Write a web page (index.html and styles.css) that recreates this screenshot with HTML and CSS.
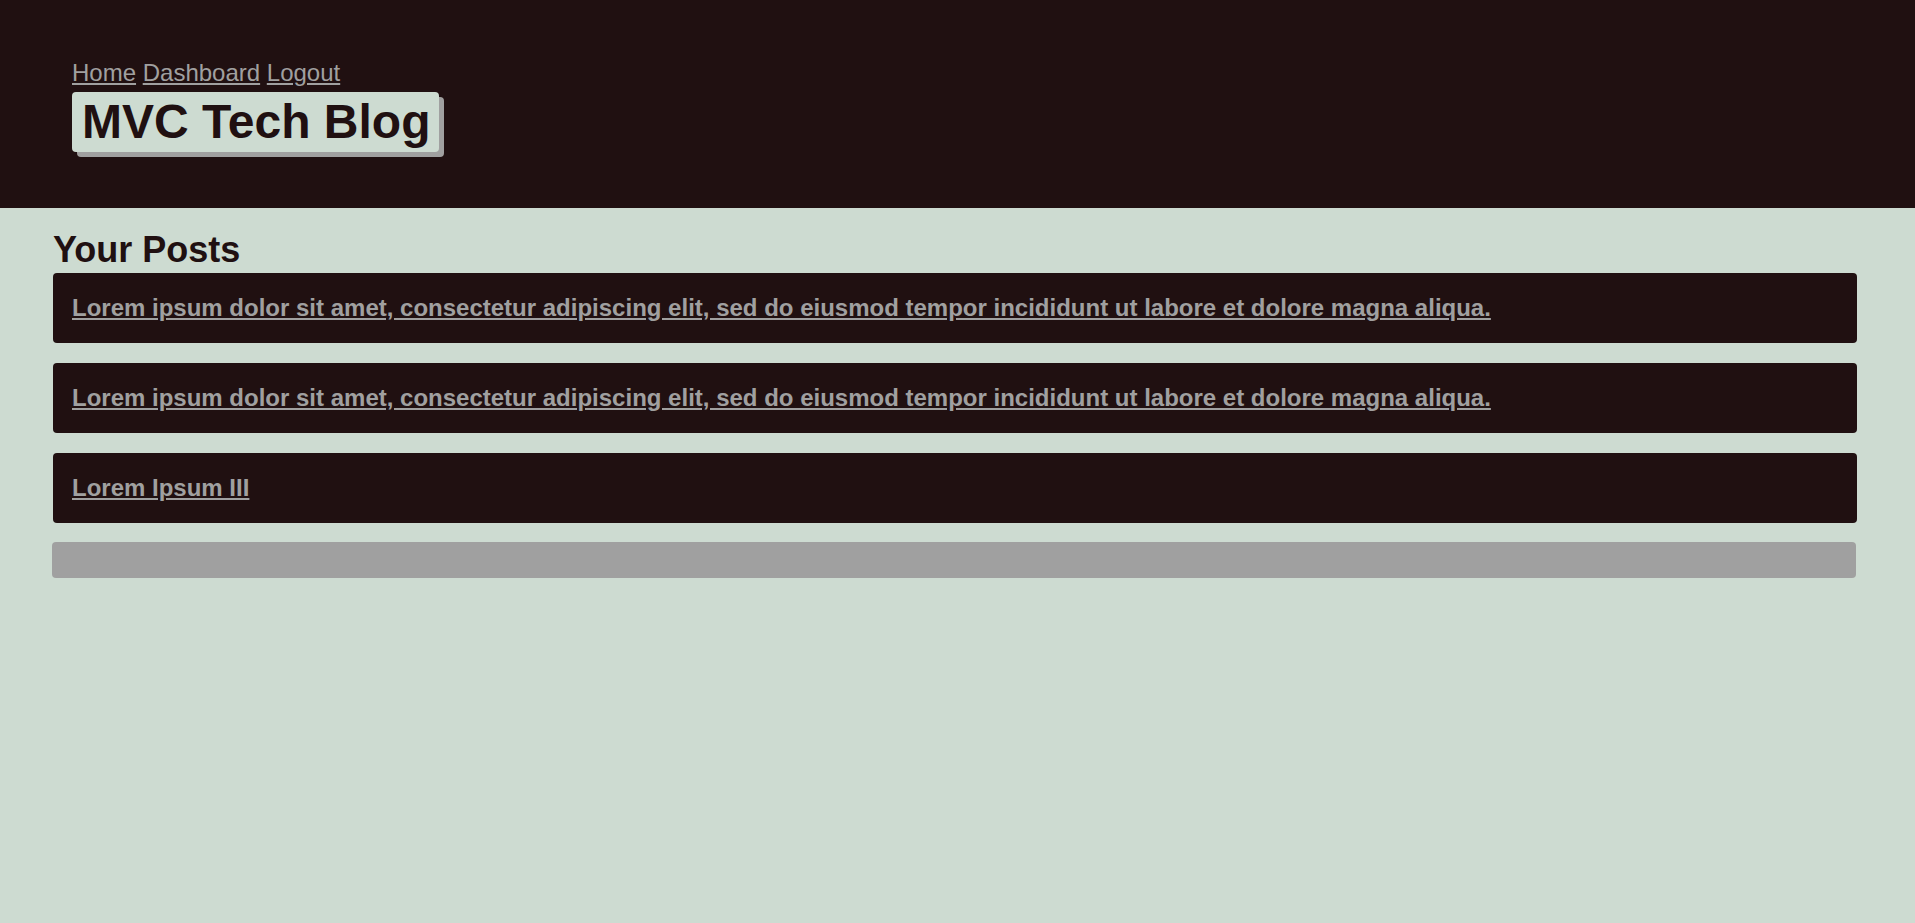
FILE: index.html
```html
<!DOCTYPE html>
<html lang="en">
<head>
<meta charset="utf-8">
<title>MVC Tech Blog</title>
<link rel="stylesheet" href="styles.css">
</head>
<body>
<header class="site-header">
  <nav class="nav">
    <a href="#">Home</a> <a href="#">Dashboard</a> <a href="#">Logout</a>
  </nav>
  <h1 class="brand">MVC Tech Blog</h1>
</header>
<main class="content">
  <h2 class="section-title">Your Posts</h2>
  <div class="post-card"><a class="post-link" href="#">Lorem ipsum dolor sit amet, consectetur adipiscing elit, sed do eiusmod tempor incididunt ut labore et dolore magna aliqua.</a></div>
  <div class="post-card"><a class="post-link" href="#">Lorem ipsum dolor sit amet, consectetur adipiscing elit, sed do eiusmod tempor incididunt ut labore et dolore magna aliqua.</a></div>
  <div class="post-card"><a class="post-link" href="#">Lorem Ipsum III</a></div>
  <div class="new-post-bar"></div>
</main>
</body>
</html>
```
FILE: styles.css
```css
html, body {
  margin: 0;
  padding: 0;
}
body {
  background: #cddbd1;
  font-family: "Liberation Sans", Arial, sans-serif;
  color: #201011;
  min-height: 923px;
}
.site-header {
  background: #201011;
  padding: 59px 0 56px 72px;
}
.nav {
  font-size: 24px;
  line-height: 28px;
  height: 28px;
}
.nav a {
  color: #a0a0a0;
  text-decoration: underline;
}
.brand {
  display: block;
  width: fit-content;
  margin: 5px 0 0;
  padding: 2px 9px 3px 10px;
  font-size: 48px;
  line-height: 55px;
  font-weight: bold;
  color: #201011;
  background: #cddbd1;
  border-radius: 4px;
  box-shadow: 5px 5px 0 #a0a0a0;
}
.content {
  padding: 21px 58px 0 53px;
}
.section-title {
  margin: 0 0 3px;
  font-size: 36px;
  line-height: 41px;
  font-weight: bold;
}
.post-card {
  display: flex;
  align-items: center;
  height: 70px;
  padding: 0 19px;
  margin-bottom: 20px;
  background: #201011;
  border-radius: 4px;
}
.post-link {
  color: #a0a0a0;
  font-size: 24px;
  font-weight: bold;
  line-height: 28px;
  text-decoration: underline;
}
.new-post-bar {
  height: 36px;
  margin: -1px 1px 0 -1px;
  background: #a0a0a0;
  border-radius: 4px;
}
```
